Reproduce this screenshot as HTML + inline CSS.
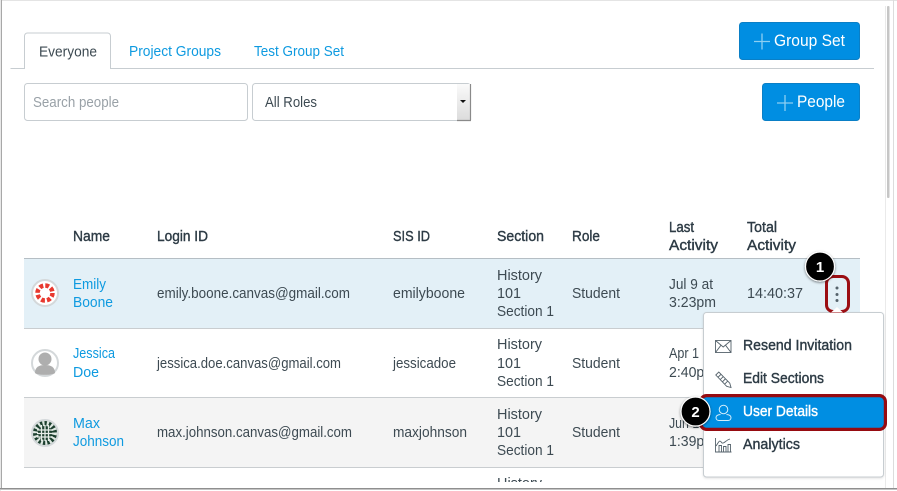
<!DOCTYPE html>
<html><head><meta charset="utf-8"><style>
html,body{margin:0;padding:0;background:#fff;width:897px;height:491px;overflow:hidden}
svg{display:block;position:absolute;left:0;top:0}
text{font-family:"Liberation Sans",sans-serif;font-size:15px;fill:#3d4a52}
.l{fill:#0e9ae0}
.b{fill:#2d3b45;stroke:#2d3b45;stroke-width:.4}
.w{fill:#fff;font-size:16.500px}
</style></head><body>
<svg width="897" height="491" viewBox="0 0 897 491" xmlns="http://www.w3.org/2000/svg">
<defs>
<filter id="s" x="-30%" y="-30%" width="170%" height="170%"><feDropShadow dx="0" dy="1" stdDeviation="1.400" flood-color="#000" flood-opacity=".5"/></filter>
<linearGradient id="g" x1="0" x2="0" y1="0" y2="1"><stop offset="0" stop-color="#fafafa"/><stop offset="1" stop-color="#dcdcdc"/></linearGradient>
</defs>
<rect x="0" y="0" width="897" height="1" fill="#e4e4e4"/>
<rect x="1" y="0" width="1" height="488" fill="#a8a8a8"/>
<rect x="0" y="0" width="1" height="491" fill="#e8e8e8"/>
<rect x="0" y="488" width="897" height="1" fill="#8f8f8f"/>
<rect x="0" y="489" width="897" height="1" fill="#c4c4c4"/>
<rect x="893" y="0" width="1" height="488" fill="#dcdcdc"/>
<rect x="885" y="6" width="1" height="482" fill="#eaeaea"/>
<rect x="887" y="6" width="2.500" height="192" rx="1" fill="#c6c6c6"/>

<!-- tabs -->
<path d="M10.500 68.500H24.500V36a3 3 0 0 1 3-3H107.500a3 3 0 0 1 3 3V68.500H874" fill="none" stroke="#c7cdd1"/>
<rect x="25" y="60" width="85" height="10" fill="#fff"/>
<text x="39" y="56.500" textLength="58" lengthAdjust="spacingAndGlyphs">Everyone</text>
<text x="129" y="56" class="l" textLength="92" lengthAdjust="spacingAndGlyphs">Project Groups</text>
<text x="254" y="56" class="l" textLength="90" lengthAdjust="spacingAndGlyphs">Test Group Set</text>

<!-- buttons -->
<rect x="739.500" y="22.500" width="120" height="37" rx="3" fill="#008ee2" stroke="#0a7fc6"/>
<path d="M762 33.500v16M754 41.500h16" stroke="#8ccff2" stroke-width="1.300" fill="none"/>
<text x="774" y="46" class="w" textLength="71" lengthAdjust="spacingAndGlyphs">Group Set</text>
<rect x="762.500" y="83.500" width="97" height="37" rx="3" fill="#008ee2" stroke="#0a7fc6"/>
<path d="M785 95v16M777 103h16" stroke="#8ccff2" stroke-width="1.300" fill="none"/>
<text x="797" y="107" class="w" textLength="48" lengthAdjust="spacingAndGlyphs">People</text>

<!-- inputs -->
<rect x="24.500" y="83.500" width="223" height="37" rx="3" fill="#fff" stroke="#c7cdd1"/>
<text x="33" y="107" style="fill:#99a1a7" textLength="86" lengthAdjust="spacingAndGlyphs">Search people</text>
<rect x="252.500" y="83.500" width="218" height="37" rx="3" fill="#fff" stroke="#c7cdd1"/>
<text x="265" y="107" textLength="52" lengthAdjust="spacingAndGlyphs">All Roles</text>
<rect x="457" y="84" width="13" height="36" fill="url(#g)"/>
<path d="M470.500 84v36M457 120.500h14" stroke="#8a8a8a" stroke-width="1.200"/>
<path d="M460 100h6l-3 3z" fill="#111"/>

<!-- headers -->
<text x="73" y="241" class="b" textLength="37" lengthAdjust="spacingAndGlyphs">Name</text>
<text x="157" y="241" class="b" textLength="51" lengthAdjust="spacingAndGlyphs">Login ID</text>
<text x="393" y="241" class="b" textLength="37" lengthAdjust="spacingAndGlyphs">SIS ID</text>
<text x="497" y="241" class="b" textLength="47" lengthAdjust="spacingAndGlyphs">Section</text>
<text x="572" y="241" class="b" textLength="28" lengthAdjust="spacingAndGlyphs">Role</text>
<text x="669" y="232" class="b" textLength="25" lengthAdjust="spacingAndGlyphs">Last</text>
<text x="669" y="250" class="b" textLength="49" lengthAdjust="spacingAndGlyphs">Activity</text>
<text x="747" y="232" class="b" textLength="30" lengthAdjust="spacingAndGlyphs">Total</text>
<text x="747" y="250" class="b" textLength="49" lengthAdjust="spacingAndGlyphs">Activity</text>

<!-- rows -->
<rect x="24" y="259" width="836" height="70" fill="#e3f0f7"/>
<rect x="24" y="398" width="836" height="70" fill="#f4f4f4"/>
<path d="M24 258.500H860" stroke="#b5bec4"/>
<path d="M24 328.500H860M24 397.500H860M24 467.500H860" stroke="#c9cdd0"/>

<!-- avatars -->
<circle cx="45" cy="293" r="13" fill="#fff" stroke="#d4d8da" stroke-width="2"/>
<circle cx="45" cy="293" r="7.500" fill="none" stroke="#e8392f" stroke-width="4.500" stroke-dasharray="3.800 2.100"/>
<circle cx="45" cy="363" r="13" fill="#fff" stroke="#d4d8da" stroke-width="2"/>
<circle cx="45" cy="359" r="6.500" fill="#aeaeae"/>
<path d="M35 373c0-6 4-8 10-8s10 2 10 8c-3 2.500-17 2.500-20 0z" fill="#aeaeae"/>
<circle cx="45" cy="433" r="13" fill="#1c3f2e" stroke="#d4d8da" stroke-width="2"/>
<circle cx="45" cy="433" r="9.500" fill="none" stroke="#dfe8e2" stroke-width="5" stroke-dasharray="2 2.200"/>
<path d="M37 430h16M37 433.500h16M37 437h16M41.500 425v16M45 425v16M48.500 425v16" stroke="#e6ece8" stroke-width="1.300" fill="none"/>

<!-- row 1 -->
<text x="73" y="289" class="l" textLength="33" lengthAdjust="spacingAndGlyphs">Emily</text>
<text x="73" y="307" class="l" textLength="40" lengthAdjust="spacingAndGlyphs">Boone</text>
<text x="157" y="298" textLength="193" lengthAdjust="spacingAndGlyphs">emily.boone.canvas@gmail.com</text>
<text x="393" y="298" textLength="72" lengthAdjust="spacingAndGlyphs">emilyboone</text>
<text x="497" y="280" textLength="45" lengthAdjust="spacingAndGlyphs">History</text>
<text x="497" y="298" textLength="24" lengthAdjust="spacingAndGlyphs">101</text>
<text x="497" y="316" textLength="57" lengthAdjust="spacingAndGlyphs">Section 1</text>
<text x="572" y="298" textLength="48" lengthAdjust="spacingAndGlyphs">Student</text>
<text x="669" y="289" textLength="44" lengthAdjust="spacingAndGlyphs">Jul 9 at</text>
<text x="669" y="307" textLength="47" lengthAdjust="spacingAndGlyphs">3:23pm</text>
<text x="747" y="298" textLength="56" lengthAdjust="spacingAndGlyphs">14:40:37</text>

<!-- row 2 -->
<text x="73" y="358" class="l" textLength="42" lengthAdjust="spacingAndGlyphs">Jessica</text>
<text x="73" y="377" class="l" textLength="26" lengthAdjust="spacingAndGlyphs">Doe</text>
<text x="157" y="368" textLength="184" lengthAdjust="spacingAndGlyphs">jessica.doe.canvas@gmail.com</text>
<text x="393" y="368" textLength="63" lengthAdjust="spacingAndGlyphs">jessicadoe</text>
<text x="497" y="349" textLength="45" lengthAdjust="spacingAndGlyphs">History</text>
<text x="497" y="368" textLength="24" lengthAdjust="spacingAndGlyphs">101</text>
<text x="497" y="386" textLength="57" lengthAdjust="spacingAndGlyphs">Section 1</text>
<text x="572" y="368" textLength="48" lengthAdjust="spacingAndGlyphs">Student</text>
<text x="669" y="358" textLength="44" lengthAdjust="spacingAndGlyphs">Apr 1 at</text>
<text x="669" y="377" textLength="47" lengthAdjust="spacingAndGlyphs">2:40pm</text>

<!-- row 3 -->
<text x="73" y="428" class="l" textLength="27" lengthAdjust="spacingAndGlyphs">Max</text>
<text x="73" y="446" class="l" textLength="51" lengthAdjust="spacingAndGlyphs">Johnson</text>
<text x="157" y="437" textLength="195" lengthAdjust="spacingAndGlyphs">max.johnson.canvas@gmail.com</text>
<text x="393" y="437" textLength="74" lengthAdjust="spacingAndGlyphs">maxjohnson</text>
<text x="497" y="419" textLength="45" lengthAdjust="spacingAndGlyphs">History</text>
<text x="497" y="437" textLength="24" lengthAdjust="spacingAndGlyphs">101</text>
<text x="497" y="455" textLength="57" lengthAdjust="spacingAndGlyphs">Section 1</text>
<text x="572" y="437" textLength="48" lengthAdjust="spacingAndGlyphs">Student</text>
<text x="669" y="428" textLength="44" lengthAdjust="spacingAndGlyphs">Jun 1 at</text>
<text x="669" y="446" textLength="47" lengthAdjust="spacingAndGlyphs">1:39pm</text>

<!-- row 4 clipped -->
<svg x="497" y="470" width="60" height="12" viewBox="497 470 60 12"><text x="497" y="488" textLength="45" lengthAdjust="spacingAndGlyphs">History</text></svg>

<!-- kebab -->
<circle cx="837" cy="288" r="1.500" fill="#56636c"/>
<circle cx="837" cy="294.500" r="1.500" fill="#56636c"/>
<circle cx="837" cy="300.500" r="1.500" fill="#56636c"/>

<!-- menu -->
<rect x="703.500" y="312.500" width="180" height="164.500" rx="3" fill="#fff" stroke="#c7cdd1" style="filter:drop-shadow(0 1px 1px rgba(0,0,0,.12))"/>
<rect x="826.500" y="276.500" width="22" height="35" rx="6.500" fill="none" stroke="#9b0e13" stroke-width="3"/>
<path d="M831 312.500l6-5.500 6 5.500z" fill="#fff"/>

<rect x="700.600" y="395.600" width="184.800" height="33.800" rx="6" fill="#008ee2" stroke="#960b11" stroke-width="3.200"/>

<text x="743" y="350" class="b" textLength="109" lengthAdjust="spacingAndGlyphs">Resend Invitation</text>
<text x="743" y="383" class="b" textLength="81" lengthAdjust="spacingAndGlyphs">Edit Sections</text>
<text x="743" y="416" class="b" style="fill:#fff;stroke:#fff" textLength="75" lengthAdjust="spacingAndGlyphs">User Details</text>
<text x="743" y="449" class="b" textLength="57" lengthAdjust="spacingAndGlyphs">Analytics</text>

<!-- menu icons -->
<g fill="none" stroke="#56636c" stroke-width=".9">
<rect x="715.500" y="340.500" width="15.500" height="12"/>
<path d="M715.500 340.500l7.700 6.500 7.800-6.500M715.500 352.500l5.500-7.300M731 352.500l-5.500-7.300"/>
<path d="M715.800 375l3-3 11 11.200 1.200 4.300-4.300-1.200zM717.800 377.500l3-3M720 379.800l3-3M722.300 382l3-3M724.500 384.300l3-3"/>
<path d="M719 451.500v-6h2.500v6M723.500 451.500v-5h2.500v5M728 451.500v-7h2.500v7M715.500 438v14h16M716 446c3-4 3-7 6-3 2 1 4-3 8-4"/>
</g>
<g fill="none" stroke="#d5eefb" stroke-width="1">
<circle cx="723.500" cy="409.500" r="4.300"/>
<path d="M720.500 414.500c-3 .3-4.500 1.300-4.500 3 0 2 1.500 3 3 3h9c1.500 0 3-1 3-3 0-1.700-1.500-2.700-4.500-3"/>
</g>

<!-- badges -->
<circle cx="820" cy="266.500" r="14.500" fill="#000" stroke="#fff" stroke-width="1.200" filter="url(#s)"/>
<text x="820" y="272" text-anchor="middle" style="font-weight:bold;fill:#fff;font-size:15px">1</text>
<circle cx="695.500" cy="411.500" r="14.500" fill="#000" stroke="#fff" stroke-width="1.200" filter="url(#s)"/>
<text x="695.500" y="417" text-anchor="middle" style="font-weight:bold;fill:#fff;font-size:15px">2</text>
</svg>
</body></html>
